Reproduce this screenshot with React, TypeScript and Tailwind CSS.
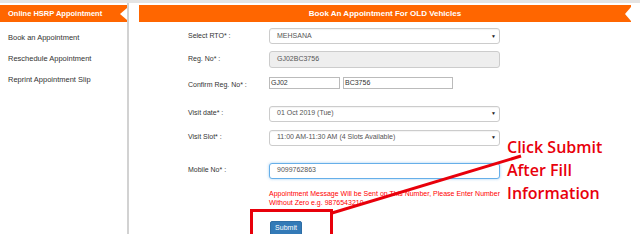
const labelCls = 'w-[81px] shrink-0 text-[7px] text-[#333]';

function Caret() {
  return <span className="text-[5px] leading-none text-[#222]">▼</span>;
}

function SelectBox({ value }: { value: string }) {
  return (
    <div className="flex h-[16px] w-[231px] items-center justify-between rounded-[3px] border border-[#ccc] bg-white pl-[7px] pr-[3px] text-[7px] text-[#555] shadow-[inset_0_1px_1px_rgba(0,0,0,0.05)]">
      <span>{value}</span>
      <Caret />
    </div>
  );
}

export default function App() {
  return (
    <div className="relative h-[234px] w-[640px] overflow-hidden bg-white font-['Liberation_Sans',Arial,sans-serif]">
      <div className="h-[3px] bg-[#e4e4e4]" />
      <div className="flex h-[231px]">
        {/* sidebar */}
        <div className="w-[127px] shrink-0 pt-[2px]">
          <div className="relative flex h-[17px] items-center bg-[#ff6600] pl-[8px] text-[7.5px] font-bold text-white">
            Online HSRP Appointment
            <span className="absolute right-0 top-[3px] h-0 w-0 border-y-[6px] border-r-[7px] border-y-transparent border-r-white" />
          </div>
          <div className="pt-[5px] text-[7.5px] text-[#333]">
            <div className="flex h-[21px] items-center pl-[8px]">Book an Appointment</div>
            <div className="flex h-[21px] items-center pl-[8px]">Reschedule Appointment</div>
            <div className="flex h-[21px] items-center pl-[8px]">Reprint Appointment Slip</div>
          </div>
        </div>
        <div className="w-[2px] shrink-0 bg-[#d2d2d2]" />

        {/* main */}
        <div className="flex-1 pl-[10px] pr-[9px] pt-[2px]">
          <div className="relative flex h-[17px] items-center justify-center bg-[#ff6600] text-[8px] font-bold text-white">
            Book An Appointment For OLD Vehicles
            <span className="absolute right-0 top-[2px] h-0 w-0 border-y-[7px] border-r-[6px] border-y-transparent border-r-white" />
          </div>

          <div className="pl-[49px]">
            <div className="mt-[6px] flex items-center">
              <div className={labelCls}>Select RTO* :</div>
              <SelectBox value="MEHSANA" />
            </div>

            <div className="mt-[7px] flex items-center">
              <div className={labelCls}>Reg. No* :</div>
              <div className="flex h-[17px] w-[231px] items-center rounded-[3px] border border-[#ccc] bg-[#eeeeee] pl-[7px] text-[7px] text-[#555]">
                GJ02BC3756
              </div>
            </div>

            <div className="mt-[8px] flex items-center">
              <div className={`${labelCls} pt-[4px]`}>Confirm Reg. No* :</div>
              <div className="flex gap-[3px]">
                <div className="flex h-[12px] w-[71px] items-center border border-[#bbb] pl-[1px] text-[7px] text-[#333]">GJ02</div>
                <div className="flex h-[12px] w-[110px] items-center border border-[#bbb] pl-[1px] text-[7px] text-[#333]">BC3756</div>
              </div>
            </div>

            <div className="mt-[15px] flex items-center">
              <div className={labelCls}>Visit date* :</div>
              <SelectBox value="01 Oct 2019 (Tue)" />
            </div>

            <div className="mt-[8px] flex items-center">
              <div className={labelCls}>Visit Slot* :</div>
              <SelectBox value="11:00 AM-11:30 AM (4 Slots Available)" />
            </div>

            <div className="mt-[17px] flex items-center">
              <div className={labelCls}>Mobile No* :</div>
              <div className="flex h-[16px] w-[231px] items-center rounded-[3px] border border-[#66afe9] bg-white pl-[7px] text-[7px] text-[#555] shadow-[0_0_3px_rgba(102,175,233,0.6)]">
                9099762863
              </div>
            </div>

            <div className="ml-[81px] mt-[10px] whitespace-nowrap text-[7px] leading-[9px] text-[#ff0000]">
              Appointment Message Will be Sent on This Number, Please Enter Number
              <br />
              Without Zero e.g. 9876543210
            </div>

            <div className="ml-[82px] mt-[14px]">
              <button className="flex h-[17px] w-[32px] items-center justify-center rounded-[2px] border border-[#2e6da4] bg-[#337ab7] pb-[2px] text-[7px] text-white">
                Submit
              </button>
            </div>
          </div>
        </div>
      </div>

      {/* annotation overlay */}
      <div className="absolute left-[250px] top-[209px] h-[40px] w-[83px] border-[3px] border-[#e8000b]" />
      <svg className="absolute left-0 top-0" width="640" height="234">
        <line x1="332" y1="213" x2="521" y2="156" stroke="#e8000b" strokeWidth="3" />
      </svg>
      <div className="absolute left-[507px] top-[136px] font-['Open_Sans',sans-serif] text-[16px] font-semibold leading-[23px] text-[#e8000b]">
        Click Submit
        <br />
        After Fill
        <br />
        Information
      </div>
    </div>
  );
}
